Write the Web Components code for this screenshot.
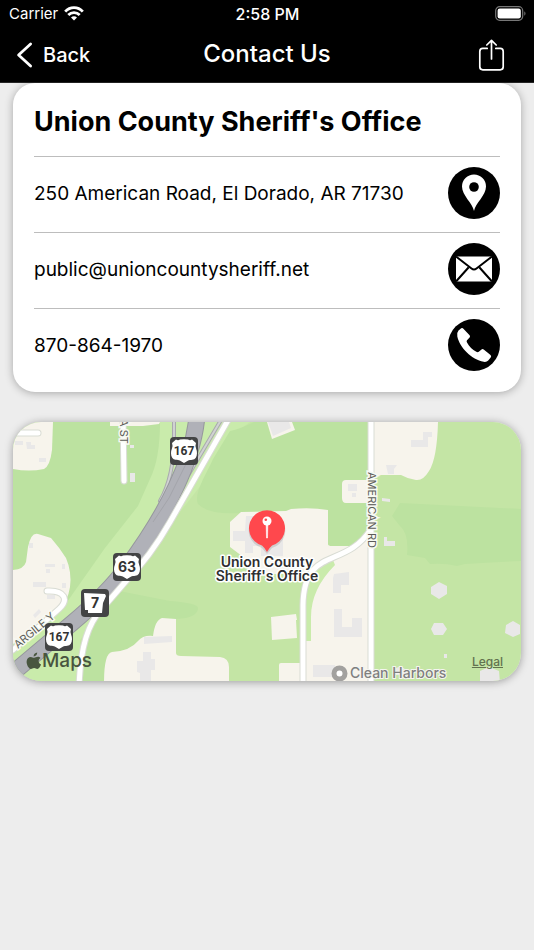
<!DOCTYPE html>
<html lang="en">
<head>
    <meta charset="UTF-8">
    <meta name="viewport" content="width=device-width, initial-scale=1.0">
    <title>Contact Us</title>
    <style>
        body {
            margin: 0;
            background-color: #ededed;
            color: #000;
            font-family: Inter, "Liberation Sans", sans-serif;
        }
        main {
            display: flex;
            flex-direction: column;
            gap: 30px;
            padding: 0 13px 30px;
        }
    </style>
</head>
<body>
    <template id="status-bar-template">
        <style>
            :host {
                display: grid;
                grid-template-columns: 1fr auto 1fr;
                align-items: center;
                height: 27px;
                padding: 0 8px 1px 9px;
                background-color: #000;
                color: #fff;
                font-size: 15px;
            }
            .carrier {
                display: flex;
                align-items: center;
                gap: 6px;
            }
            .time {
                font-size: 16px;
                font-weight: 500;
            }
            .battery {
                justify-self: end;
            }
            svg {
                display: block;
            }
        </style>
        <div class="carrier">
            <slot name="carrier"></slot>
            <svg width="20" height="15" viewBox="0 0 20 15" fill="none" stroke="#fff" stroke-width="2.8">
                <path d="M1.2 5.6C6 .3 14 .3 18.800 5.600"/>
                <path d="M4.300 9c3.200-3.300 8.200-3.300 11.400 0"/>
                <path d="M10 14.600l-3-3.100c1.800-1.600 4.200-1.600 6 0z" fill="#fff" stroke="none"/>
            </svg>
        </div>
        <div class="time"><slot></slot></div>
        <svg class="battery" width="31" height="15" viewBox="0 0 31 15">
            <rect x=".7" y=".7" width="27" height="13.600" rx="4" fill="none" stroke="#777" stroke-width="1.200"/>
            <rect x="2.600" y="2.600" width="23.200" height="9.800" rx="2.200" fill="#fff"/>
            <path d="M29.300 5.300c1.600.8 1.600 3.600 0 4.400z" fill="#777"/>
        </svg>
    </template>

    <template id="nav-bar-template">
        <style>
            :host {
                display: grid;
                grid-template-columns: 1fr auto 1fr;
                align-items: center;
                height: 54px;
                padding: 0 29px 0 16px;
                border-bottom: 1px solid #262626;
                background-color: #000;
                color: #fff;
            }
            button {
                display: flex;
                align-items: center;
                gap: 10px;
                padding: 0;
                border: none;
                background: none;
                color: inherit;
                font: inherit;
                font-size: 20px;
                font-weight: 500;
                cursor: pointer;
            }
            .share {
                justify-self: end;
            }
            h1 {
                margin: 0;
                padding: 0 0 3px 13px;
                font-size: 24px;
                font-weight: 500;
            }
        </style>
        <button type="button" class="back">
            <svg width="17" height="26" viewBox="0 0 17 26" fill="none" stroke="#fff" stroke-width="2.800" stroke-linecap="round" stroke-linejoin="round">
                <path d="M14.600 2L2.600 13l12 11"/>
            </svg>
            <span>Back</span>
        </button>
        <h1><slot></slot></h1>
        <button type="button" class="share" aria-label="Share">
            <svg width="27" height="32" viewBox="0 0 27 32" fill="none" stroke="#fff" stroke-width="1.700" stroke-linecap="round" stroke-linejoin="round">
                <path d="M9.200 9.400H4.800a3 3 0 0 0-3 3v15.400a3 3 0 0 0 3 3h17.400a3 3 0 0 0 3-3V12.400a3 3 0 0 0-3-3h-4.400"/>
                <path d="M13.500 20V1.500M8.800 6l4.700-4.700L18.200 6"/>
            </svg>
        </button>
    </template>

    <template id="contact-card-template">
        <style>
            :host {
                display: block;
                padding: 0 21px 8px;
                border-radius: 22px;
                background-color: #fff;
                box-shadow: 0 1px 9px rgba(0, 0, 0, 0.3);
            }
            h2 {
                margin: 0;
                padding: 21px 0 16px;
                font-size: 27px;
                line-height: 36px;
                font-weight: 700;
            }
        </style>
        <h2><slot name="heading"></slot></h2>
        <slot></slot>
    </template>

    <template id="contact-row-template">
        <style>
            :host {
                display: flex;
                align-items: center;
                justify-content: space-between;
                gap: 12px;
                padding: 10px 0 13px;
                border-top: 1px solid #bdbdbd;
                font-size: 19px;
            }
            button {
                flex: none;
                padding: 0;
                border: none;
                border-radius: 50%;
                background: none;
                cursor: pointer;
            }
            svg {
                display: block;
            }
        </style>
        <span><slot></slot></span>
        <button type="button">
            <svg width="52" height="52" viewBox="0 0 52 52"></svg>
        </button>
    </template>

    <template id="location-map-template">
        <style>
            :host {
                display: block;
                position: relative;
                overflow: hidden;
                border-radius: 28px;
                box-shadow: 0 1px 9px rgba(0, 0, 0, 0.35);
            }
            svg {
                display: block;
                width: 100%;
                height: 259px;
            }
            .land { fill: #f7f4ec; }
            .wood { fill: #bce2a0; }
            .verge { fill: #c9ebab; }
            .building { fill: #e9e8e8; }
            .road-edge, .road, .highway-edge, .highway, .ramp-edge, .ramp {
                fill: none;
                stroke-linecap: round;
                stroke-linejoin: round;
            }
            .road-edge { stroke: #d9dcd4; stroke-width: 7; }
            .road { stroke: #fff; stroke-width: 5; }
            .highway-edge { stroke: #96979d; stroke-width: 17; }
            .highway { stroke: #b0b1b8; stroke-width: 15; }
            .ramp-edge { stroke: #a9aaae; stroke-width: 4; }
            .ramp { stroke: #d0d2d2; stroke-width: 2; }
            .street {
                fill: #5c5c58;
                stroke: #f7f9f2;
                stroke-width: 3px;
                paint-order: stroke;
                font-size: 11px;
            }
            .shield {
                fill: #333;
                font-size: 14px;
                font-weight: 700;
                text-anchor: middle;
            }
            .three-digit {
                font-family: Roboto, sans-serif;
                font-size: 12px;
            }
            .place {
                fill: #2e2e30;
                stroke: #fff;
                stroke-width: 3px;
                stroke-linejoin: round;
                paint-order: stroke;
                font-size: 14px;
                font-weight: 600;
                text-anchor: middle;
            }
            .poi {
                fill: #7f7f7f;
                stroke: #f5f5f0;
                stroke-width: 2px;
                paint-order: stroke;
                font-size: 14px;
                font-weight: 500;
            }
            .brand {
                fill: #48553f;
                font-size: 19px;
                font-weight: 500;
            }
            a {
                position: absolute;
                right: 18px;
                bottom: 12px;
                color: #62724f;
                font-size: 12px;
                font-weight: 500;
            }
        </style>
        <svg viewBox="13 422 508 259" preserveAspectRatio="xMidYMid slice" role="img" aria-label="Map">
            <defs>
                <g id="us-route">
                    <rect x="-14" y="-14" width="28" height="28" rx="4" fill="#434445"/>
                    <path d="M-8-11.500q2 1.300 4 0l4-.3 4 .3q2 1.300 4 0l4 3.600q-1.200 3 .2 5.900c1.100 2.500 1.100 6.200-.4 8.800-1.600 2.700-5.200 1.800-8 2.900L0 12l-3.800-2.300c-2.800-1.100-6.400-.2-8-2.900-1.500-2.600-1.500-6.300-.4-8.800q1.400-2.900.2-5.900z" fill="#fff"/>
                </g>
            </defs>
            <rect x="13" y="422" width="508" height="261" fill="#c4e5a5"/>
            <path class="verge" d="M150 422h100C235 432 220 452 205 480L80 640v43H13v-50z"/>
            <!-- woods -->
            <path class="wood" d="M13 422h147q0 37-10 57l-12 27-33 42-38 54H13z"/>
            <path class="wood" d="M230 431q10-2 24-9h117v124h-43l-30-30-58-3q-32 2-42-9c-5-10 9-31 15-45z"/>
            <path class="wood" d="M400 503q60 3 121 6v52q-30 1-56 3l-8 2q-12-3-27-2l-5-6-18-3q2-22-7-29l-8-10z"/>
            <path class="wood" d="M114 590l56 11q28 2 28 7 0 10-22 11l-14 64H80q0-42 20-67z"/>
            <!-- cleared land -->
            <path class="land" d="M13 422h40l-1 28q-2 16-8 19-15 3-31 0z"/>
            <path class="land" d="M110 422h50l-1 2-16 2h-33z"/>
            <path class="land" d="M13 570q11-1 13-8l2-15q3-15 10-13l13 4q8 9 15 20 6 14 4 29-2 14-12 24l-45 33z"/>
            <path class="land" d="M104 683q0-30 8-31 18-1 26-11 5-6 15-5 2-16 9-18l14 1v34q0 3 5 3l39 1q9 1 9 10v16z"/>
            <path class="land" d="M267 422l5 17 23-9-3-8z"/>
            <path class="land" d="M230 522l11-10 45-1 5-2q20-2 37 1v34q0 2 4 2h18l22-13v150h-69v-80l5-24-20-5h-35q-10-8-11-18l-12-9z"/>
            <path class="land" d="M342 484q0-4 4-4h25v23h-25q-4 0-4-5z"/>
            <path class="land" d="M373 422h65q-1 37-9 49-6 10-13 9-8-1-15-5h-28z"/>
            <path class="land" d="M271 617l25-3 1 6h-1l1 18-25 2z"/>
            <path class="land" d="M279 683v-18q0-2 2-2h24v20z"/>
            <path class="verge" d="M306 580q12-15 27-20l2 5q-24 24-24 52v24h-5z"/>
            <!-- buildings -->
            <path class="building" d="M15 441h8v4h-8zM26 442h5v3h4v4h-8zM39 458h7v4h-7zM130 445h4v3h-4zM130 473h5v9h-5zM29 543h4v5h-4zM45 564h10v3h-10zM62 564h3v5h-3zM46 569h4v4h-4zM33 582h13v5H33zM47 595h8v4h-8zM62 583h4v5h-4zM33 615l6-6 2 3-6 6z"/>
            <path class="building" d="M144 637l28-1v6l-28 2zM143 652h8v7h4v11h-4v12h-11v-9l-3-1v-11h6z"/>
            <path class="building" d="M268 422l5 14 18-8-2-6zM246 516h9v15h28v25h-22v-10h-8v7h-8v-12h-12v-10h12zM348 484h9v7h-9zM352 493h4v4h-4z"/>
            <path class="building" d="M411 440h12v-8h9v5h-4v10h-17zM386 465h11l-3 4v5h-6zM382 498l8 1v3l-8-1zM384 537h3v4h8v5h-11zM334 574l15-2v13h-8v8h-8v-15zM334 609h8v18h10v-9h10v19h-28zM313 665h22v12h-22z"/>
            <path class="building" d="M439 582l8 4v8l-8 5-8-5v-7zM434 623h9l4 6-4 6h-9l-3-6zM513 621l7 4v9l-7 3-8-4 1-8zM444 654h3v4h-3zM480 671l9-4 10 4 1 12h-20zM396 668l5-2 5 4v5h-10z"/>
            <!-- roads -->
            <path class="ramp-edge" d="M174 415v22q0 40-14 64M221 420l-32 54"/>
            <path class="ramp" d="M174 415v22q0 40-14 64M221 420l-32 54"/>
            <path class="highway-edge" d="M197 415C194 458 168 512 127 567q-20 27-56 57L8 677"/>
            <path class="highway" d="M197 415C194 458 168 512 127 567q-20 27-56 57L8 677"/>
            <path d="M186 464l-17 34-16 24" fill="none" stroke="#a3a4aa"/>
            <g id="roads"></g>
            <!-- street names -->
            <text class="street" transform="translate(368 472) rotate(90)">AMERICAN RD</text>
            <text class="street" transform="translate(120 419) rotate(90)">A ST</text>
            <text class="street" transform="translate(18 649) rotate(-40)">ARGILE Y</text>
            <!-- route shields -->
            <use href="#us-route" x="184" y="451"/>
            <text class="shield three-digit" x="184" y="455">167</text>
            <use href="#us-route" x="127" y="567"/>
            <text class="shield" x="127" y="572">63</text>
            <rect x="81" y="589" width="28" height="28" rx="4" fill="#434445"/>
            <path d="M84 593l21 1 1 2-3 7-1 10H88v-3h-3z" fill="#fff"/>
            <text class="shield" x="95" y="608">7</text>
            <use href="#us-route" x="59" y="637"/>
            <text class="shield three-digit" x="59" y="641">167</text>
            <!-- brand -->
            <path d="M37.200 652.500c.2 2-1.700 4-3.600 3.900-.2-2 1.600-3.700 3.600-3.900zM40.500 658c-2.800 1.700-2.300 5.300.6 6.500-.8 2.100-2.200 4.400-3.800 4.400-1.200 0-1.700-.8-3.200-.8s-2 .8-3.200.8c-2.300 0-4.300-4.200-4.300-7.100 0-3 2-4.900 4.200-4.900 1.400 0 2.300.9 3.400.9s2.100-1 3.700-1c1 0 2 .5 2.600 1.200z" fill="#48553f"/>
            <text class="brand" x="42" y="667">Maps</text>
            <!-- marker -->
            <path d="M267 553l-5-6a18.300 18.300 0 1 1 10 0z" fill="#333" opacity=".15" transform="translate(0 1)"/>
            <path d="M267 552q-2-4-5-6.500a18 18 0 1 1 10 0q-3 2.500-5 6.500z" fill="#ff484d"/>
            <circle cx="267" cy="521" r="4.500" fill="#fff"/>
            <circle cx="265.800" cy="519.800" r="1.300" fill="#ff484d"/>
            <path d="M266.200 525h1.600l-.3 13h-1z" fill="#fff" stroke="#fff" stroke-width=".6"/>
            <text class="place" x="267" y="567">Union County</text>
            <text class="place" x="267" y="581">Sheriff's Office</text>
            <circle cx="339.500" cy="673.500" r="5.500" fill="#fff" stroke="#a2a19f" stroke-width="5"/>
            <text class="poi" x="350" y="678">Clean Harbors</text>
        </svg>
        <a href="#legal">Legal</a>
    </template>

    <script>
        const icons = {
            pin: `
                <circle cx="26" cy="26" r="26"/>
                <path d="M26 44c-1.500-8-12-15.500-12-24.500a12 12 0 0 1 24 0C38 28.500 27.500 36 26 44z" fill="#fff"/>
                <circle cx="26" cy="20" r="4.800"/>`,
            mail: `
                <circle cx="26" cy="26" r="26"/>
                <path d="M8 13.500h36v25H8z" fill="#fff"/>
                <path d="M8 13.500l15.500 12q2.500 2 5 0L44 13.500M8 38.500l12.500-14M44 38.500l-12.500-14" fill="none" stroke="#000" stroke-width="2"/>`,
            phone: `
                <circle cx="26" cy="26" r="26"/>
                <path d="M10.500 11.500l2.700-2.200q1.200-.8 2.200.4l6.200 6.500q.9 1.100 0 2.200l-2.600 2.800q-.8 1 0 2.300c2.400 4.200 5.300 7.200 9.300 9.300q1.400.8 2.500 0l2.700-2.400q1.100-.8 2.200.1l6.800 5.600q1.200 1.100.2 2.400l-2.500 3q-1.600 1.800-4.500 1.300C23.500 40.500 12 29 9.300 17.500q-.8-3.700 1.200-6z" fill="#fff"/>`
        };

        function attach(element, templateId) {
            const shadowRoot = element.attachShadow({ mode: 'open' });
            const template = document.getElementById(templateId);
            shadowRoot.appendChild(document.importNode(template.content, true));
            return shadowRoot;
        }

        class StatusBar extends HTMLElement {
            constructor() {
                super();
                attach(this, 'status-bar-template');
            }
        }

        class NavBar extends HTMLElement {
            constructor() {
                super();
                const shadowRoot = attach(this, 'nav-bar-template');
                shadowRoot.querySelector('.back').addEventListener('click', () => history.back());
            }
        }

        class ContactCard extends HTMLElement {
            constructor() {
                super();
                attach(this, 'contact-card-template');
            }
        }

        class ContactRow extends HTMLElement {
            constructor() {
                super();
                this.root = attach(this, 'contact-row-template');
            }

            connectedCallback() {
                const button = this.root.querySelector('button');
                button.setAttribute('aria-label', this.getAttribute('action'));
                button.addEventListener('click', () => {
                    location.href = this.getAttribute('href');
                });
                this.root.querySelector('svg').innerHTML = icons[this.getAttribute('icon')];
            }
        }

        class LocationMap extends HTMLElement {
            constructor() {
                super();
                const shadowRoot = attach(this, 'location-map-template');
                const roads = [
                    'M231 415L170 522q-20 35-43 58l-26 30Q80 632 79 690',
                    'M371 415v275',
                    'M303 690v-85C304 545 345 570 371 529',
                    'M123 415l1 66',
                    'M8 433h30',
                    'M47 591c18-1 22 9 12 18L13 650'
                ];
                // all edges go under all surfaces, so crossings stay clean
                shadowRoot.getElementById('roads').innerHTML =
                    roads.map(d => `<path class="road-edge" d="${d}"/>`).join('') +
                    roads.map(d => `<path class="road" d="${d}"/>`).join('');
            }
        }

        customElements.define('status-bar', StatusBar);
        customElements.define('nav-bar', NavBar);
        customElements.define('contact-card', ContactCard);
        customElements.define('contact-row', ContactRow);
        customElements.define('location-map', LocationMap);
    </script>

    <header>
        <status-bar><span slot="carrier">Carrier</span>2:58 PM</status-bar>
        <nav-bar>Contact Us</nav-bar>
    </header>
    <main>
        <contact-card>
            <span slot="heading">Union County Sheriff's Office</span>
            <contact-row icon="pin" action="Directions" href="#map">250 American Road, El Dorado, AR 71730</contact-row>
            <contact-row icon="mail" action="Email" href="mailto:public@unioncountysheriff.net">public@unioncountysheriff.net</contact-row>
            <contact-row icon="phone" action="Call" href="tel:870-864-1970">870-864-1970</contact-row>
        </contact-card>
        <location-map id="map"></location-map>
    </main>
</body>
</html>
